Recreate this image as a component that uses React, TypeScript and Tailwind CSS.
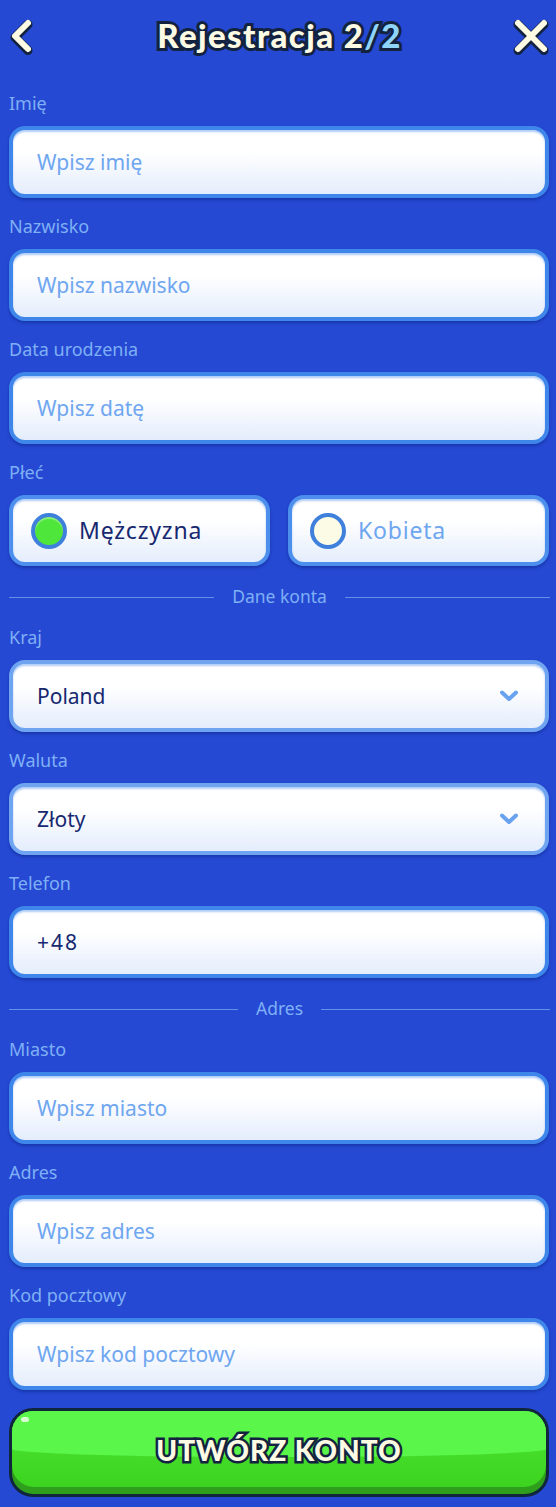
import React from "react";

const inputBox =
  "flex h-[72px] items-center rounded-[16px] border-[4px] border-[#3f86ea] bg-gradient-to-b from-[#ffffff] from-35% to-[#e4edfc] pl-[24px] pr-[24px] pt-[2px] text-[21px] shadow-[inset_0_2px_2px_rgba(60,130,235,0.4),0_2px_3px_rgba(15,40,140,0.55)]";

function Field({ label, children }: { label: string; children: React.ReactNode }) {
  return (
    <div className="flex flex-col gap-[12px]">
      <label className="mt-[-1px] mb-[1px] h-[20px] text-[18px] leading-[20px] text-[#7fb0f5]">{label}</label>
      {children}
    </div>
  );
}

function TextField({ label, text, value }: { label: string; text: string; value?: boolean }) {
  return (
    <Field label={label}>
      <div className={inputBox + (value ? " text-[#16286f] tracking-[2px]" : " text-[#6fa6f0]")}>{text}</div>
    </Field>
  );
}

function SelectField({ label, text }: { label: string; text: string }) {
  return (
    <Field label={label}>
      <div className={inputBox + " justify-between border-[#6fa4f0] text-[20.5px] text-[#16286f]"}>
        <span>{text}</span>
        <svg width="20" height="14" viewBox="0 0 20 14" className="mr-[2px] mt-[-2px]">
          <path d="M3 3.5 L10 10 L17 3.5" fill="none" stroke="#69a2ee" strokeWidth="4" strokeLinecap="round" strokeLinejoin="round" />
        </svg>
      </div>
    </Field>
  );
}

function Radio({ text, on }: { text: string; on?: boolean }) {
  return (
    <div className={"flex h-[71px] flex-1 items-center gap-[12px] rounded-[16px] border-[4px] border-[#4d8fec] bg-gradient-to-b from-[#ffffff] from-35% to-[#e4edfc] pl-[18px] text-[23px] tracking-[0.8px] shadow-[inset_0_2px_2px_rgba(60,130,235,0.4),0_2px_3px_rgba(15,40,140,0.55)] " + (on ? "text-[#16286f]" : "text-[#6fa6f0]")}>
      <span className={"h-[36px] w-[36px] shrink-0 rounded-full border-[4px] border-[#3f80dc] " + (on ? "bg-[#4fe63c] shadow-[inset_0_2px_1px_rgba(255,255,255,0.35)]" : "bg-[#fbfbe6]")} />
      <span>{text}</span>
    </div>
  );
}

function Divider({ text }: { text: string }) {
  return (
    <div className="mr-[-1px] flex h-[20px] items-center gap-[18px] text-[17.5px] text-[#7fb0f5]">
      <div className="h-px flex-1 bg-[#5f93ea]" />
      <span className="mt-[-1px]">{text}</span>
      <div className="h-px flex-1 bg-[#5f93ea]" />
    </div>
  );
}

export default function App() {
  return (
    <div className="flex h-[1507px] w-[556px] flex-col overflow-hidden bg-[#2549d3] pl-[9px] pr-[7px] font-['Noto_Sans',sans-serif]">
      <header className="flex h-[72px] shrink-0 items-center justify-between">
        <svg width="26" height="38" viewBox="0 0 26 38" className="mt-[-1px]">
          <path d="M19 6 L6 19 L19 32" fill="none" stroke="#13233f" strokeWidth="9" strokeLinecap="round" strokeLinejoin="round" transform="translate(0 1.5)" />
          <path d="M19 6 L6 19 L19 32" fill="none" stroke="#fdfbe4" strokeWidth="6" strokeLinecap="round" strokeLinejoin="round" />
        </svg>
        <h1 className="mt-[-2px] ml-[12px] text-[33px] font-black leading-none tracking-[1.4px] text-[#fdfbe4] [-webkit-text-stroke:6px_#13233f] [paint-order:stroke_fill] [text-shadow:0_2px_0_#13233f] font-['Lato',sans-serif]">
          Rejestracja 2<span className="text-[#8fd4fa]">/2</span>
        </h1>
        <svg width="38" height="38" viewBox="0 0 38 38" className="mt-[-1px] mr-[-1px]">
          <path d="M6 6 L32 32 M32 6 L6 32" fill="none" stroke="#13233f" strokeWidth="9" strokeLinecap="round" transform="translate(0 1.5)" />
          <path d="M6 6 L32 32 M32 6 L6 32" fill="none" stroke="#fdfbe4" strokeWidth="6" strokeLinecap="round" />
        </svg>
      </header>

      <main className="mt-[22px] flex flex-col gap-[19px]">
        <TextField label="Imię" text="Wpisz imię" />
        <TextField label="Nazwisko" text="Wpisz nazwisko" />
        <TextField label="Data urodzenia" text="Wpisz datę" />
        <Field label="Płeć">
          <div className="flex gap-[18px]">
            <Radio text="Mężczyzna" on />
            <Radio text="Kobieta" />
          </div>
        </Field>
      </main>

      <div className="mt-[21px]"><Divider text="Dane konta" /></div>

      <section className="mt-[21px] flex flex-col gap-[19px]">
        <SelectField label="Kraj" text="Poland" />
        <SelectField label="Waluta" text="Złoty" />
        <TextField label="Telefon" text="+48" value />
      </section>

      <div className="mt-[21px]"><Divider text="Adres" /></div>

      <section className="mt-[21px] flex flex-col gap-[19px]">
        <TextField label="Miasto" text="Wpisz miasto" />
        <TextField label="Adres" text="Wpisz adres" />
        <TextField label="Kod pocztowy" text="Wpisz kod pocztowy" />
      </section>

      <button className="relative mt-[18px] flex h-[89px] shrink-0 items-center justify-center overflow-hidden rounded-[24px] border-[3px] border-[#10263c] bg-[#2f9e1c]">
        <span className="absolute inset-x-0 top-0 bottom-[7px] rounded-b-[22px] bg-gradient-to-b from-[#4ee634] to-[#3cd41f]" />
        <span className="absolute inset-x-0 top-0 h-[46px] rounded-b-[50%_8px] bg-[#5af64a]" />
        <span className="absolute left-[9px] top-[6px] h-[5px] w-[8px] rounded-full bg-[#d8ffd0]" />
        <span className="relative mb-[6px] text-[28px] font-black tracking-[1px] text-[#fdfbe4] [-webkit-text-stroke:5px_#13233f] [paint-order:stroke_fill] font-['Lato',sans-serif]">
          UTWÓRZ KONTO
        </span>
      </button>
    </div>
  );
}
